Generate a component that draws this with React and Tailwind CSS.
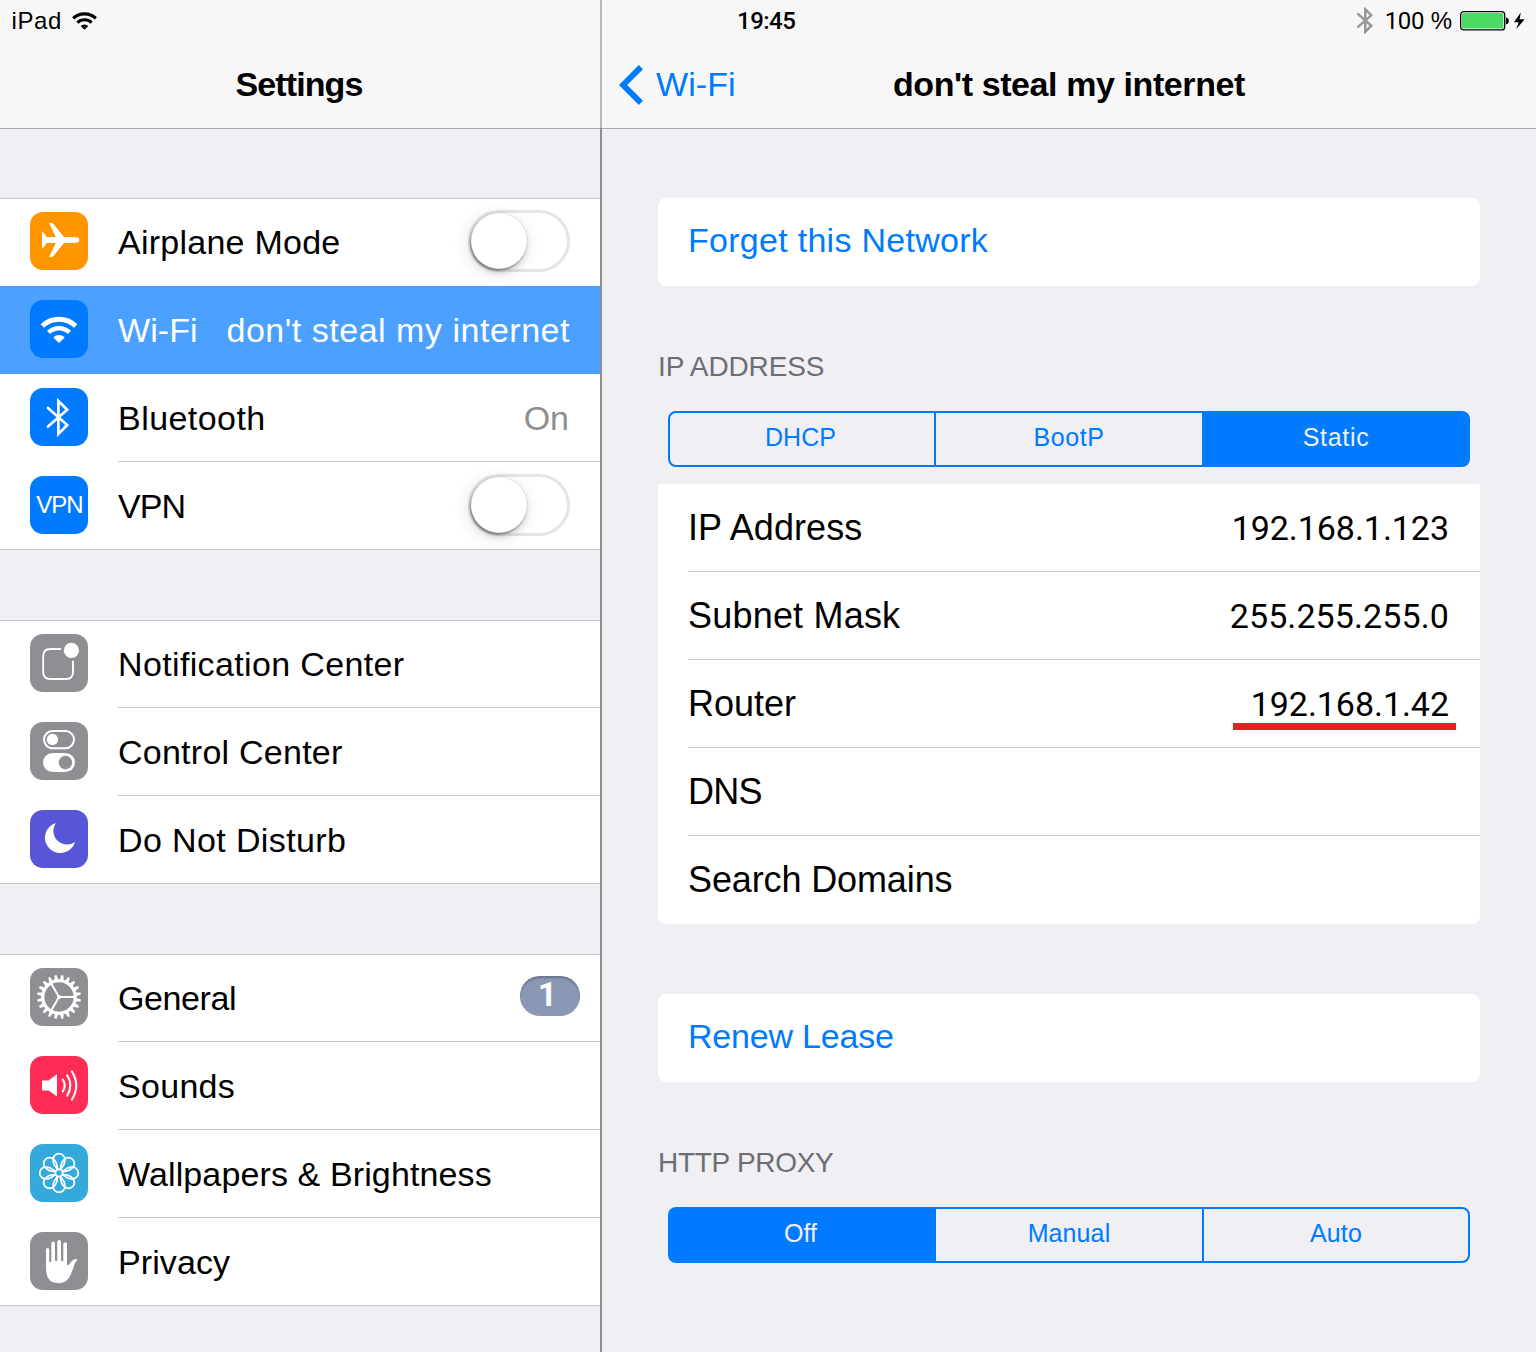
import React from "react";

const WifiGlyph = () => (
  <>
    <path d="M12.3 26A24 24 0 0 1 45.7 26" fill="none" stroke="currentColor" strokeWidth="4.8" />
    <path d="M18.5 32.4A15.1 15.1 0 0 1 39.5 32.4" fill="none" stroke="currentColor" strokeWidth="4.5" />
    <path d="M23.3 37.4A8.2 8.2 0 0 1 34.7 37.4L29 43Z" fill="currentColor" />
  </>
);

const BluetoothGlyph = ({ width = 2.7 }) => (
  <path
    d="M18 20L37.2 37L28.4 46V13L37.2 21.7L18 38.6"
    fill="none"
    stroke="currentColor"
    strokeWidth={width}
    strokeLinecap="round"
  />
);

const Tile = ({ className, children }) => (
  <svg viewBox="0 0 58 58" className={`mb-[2px] size-[58px] shrink-0 rounded-[13px] text-white ${className}`}>
    {children}
  </svg>
);

const AirplaneIcon = () => (
  <Tile className="bg-[#ff9500]">
    <path
      fill="currentColor"
      d="M12 19.6H12.8L16.6 25H25.8L19 11H22.6L34 25.1L46.3 25.3C48.2 25.4 49.4 26.6 49.4 28S48.2 30.6 46.3 30.7L34 30.9L22.6 45H19L25.8 31H16.6L12.8 36.4H12Z"
    />
  </Tile>
);

const NotificationIcon = () => (
  <Tile className="bg-[#8e8e93]">
    <path
      fill="none"
      stroke="currentColor"
      strokeWidth="1.9"
      d="M31.2 15H20.3Q13.2 15 13.2 22V38Q13.2 45 20.3 45H36Q43 45 43 38V26.8"
    />
    <circle cx="41.4" cy="16.4" r="7.6" fill="currentColor" />
  </Tile>
);

const ControlIcon = () => (
  <Tile className="bg-[#8e8e93]">
    <rect x="14" y="9" width="30" height="17.2" rx="8.6" fill="none" stroke="currentColor" strokeWidth="2" />
    <circle cx="22.4" cy="17.5" r="5.7" fill="currentColor" />
    <rect x="13" y="31" width="32" height="19" rx="9.5" fill="currentColor" />
    <circle cx="35.4" cy="40.5" r="6.7" fill="#8e8e93" />
  </Tile>
);

const MoonIcon = () => (
  <Tile className="bg-[#5856d6]">
    <path fill="currentColor" d="M26 13A15.35 15.35 0 1 0 45 32A13.6 13.6 0 0 1 26 13Z" />
  </Tile>
);

const teeth = Array.from({ length: 20 }, (_, i) => i * 18);

const GearIcon = () => (
  <Tile className="bg-[#8e8e93]">
    <circle cx="29" cy="29" r="16.2" fill="none" stroke="currentColor" strokeWidth="3.1" />
    {teeth.map((a) => (
      <path key={a} d="M27 12.2L28 7H30L31 12.2Z" fill="currentColor" transform={`rotate(${a + 9} 29 29)`} />
    ))}
    <path d="M29 29H45M29 29L21.2 15.5M29 29L21.2 42.5" stroke="currentColor" strokeWidth="2" fill="none" />
    <circle cx="29" cy="29" r="2" fill="currentColor" />
  </Tile>
);

const SoundIcon = () => (
  <Tile className="bg-[#ff2d55]">
    <path fill="currentColor" d="M12 24.6H18.6L27 18.2V40.6L18.6 34.4H12Z" />
    <path
      fill="none"
      stroke="currentColor"
      strokeWidth="2.1"
      strokeLinecap="round"
      d="M32.8 23.6Q36.8 29.4 32.8 35.3M37.2 19.4Q43.6 29.4 37.2 39.6M41.9 15.4Q50.6 29.4 41.9 43.6"
    />
  </Tile>
);

const petals = [0, 45, 90, 135, 180, 225, 270, 315];

const FlowerIcon = () => (
  <Tile className="bg-[#34aadc]">
    <g fill="none" stroke="currentColor" strokeWidth="1.7">
      {petals.map((a) => (
        <path
          key={a}
          transform={`rotate(${a} 29 29)`}
          d="M27.6 25.8L24.2 20.8Q23.1 18.6 23.1 15.6A5.9 5.9 0 0 1 34.9 15.6Q34.9 18.6 33.8 20.8L30.4 25.8"
        />
      ))}
      <circle cx="29" cy="29" r="3.6" />
    </g>
  </Tile>
);

const HandIcon = () => (
  <Tile className="bg-[#8e8e93]">
    <path
      fill="currentColor"
      d="M16 17.5A1.6 1.6 0 0 1 19.2 17.5V29.5Q20.2 30.6 21.3 29.5V11.3A1.85 1.85 0 0 1 25 11.3V28.6Q26.1 29.8 27.3 28.6V9.8A1.85 1.85 0 0 1 31 9.8V28.6Q32.2 29.8 33.3 28.6V12A1.85 1.85 0 0 1 37 12V32.6Q38 33.8 39.2 32.5Q42 27.6 45.6 27Q47.2 26.9 47.2 28.2Q45.4 29.8 44.6 32Q42.9 37.5 41.2 41.5Q37.8 51 28.6 51.2Q17.6 51 16.4 41Q16 38 16 34Z"
    />
  </Tile>
);

const VpnIcon = () => (
  <div className="mb-[2px] flex size-[58px] shrink-0 items-center justify-center rounded-[13px] bg-[#007aff] pl-px text-[24px] leading-[58px] tracking-[-1px] text-white">
    VPN
  </div>
);

const Toggle = () => (
  <div className="mb-[2px] h-[62px] w-[102px] rounded-full border-[3px] border-[#e5e5e5]">
    <div className="size-[56px] rounded-full bg-white shadow-[-1px_2px_2px_rgba(0,0,0,0.32),0_0_1px_rgba(0,0,0,0.3),0_4px_6px_rgba(0,0,0,0.12),-2px_3px_18px_rgba(0,0,0,0.12)]" />
  </div>
);

const Section = ({ children }) => (
  <section className="mb-[70px] border-t border-[#c8c7cc] bg-white *:first:-mt-px">{children}</section>
);

const line = "shadow-[inset_0_-1px_0_#c8c7cc]";

const Row = ({ icon, label, tracking, children, divider, last, selected }) => (
  <div
    className={`flex h-[88px] items-center pl-[30px] ${selected ? "bg-[#4ca0ff] text-white" : ""} ${last ? line : ""}`}
  >
    {icon}
    <div className={`ml-[30px] flex h-full flex-1 items-center justify-between pr-[30px] ${divider ? line : ""}`}>
      <span className={tracking}>{label}</span>
      {children}
    </div>
  </div>
);

const Segmented = ({ items, active }) => {
  const widths = ["w-[266px] pr-[3px] border-r-2 rounded-l-[4px]", "w-[268px] border-r-2", "w-[264px] rounded-r-[4px]"];
  return (
    <div className="mx-[10px] flex h-[56px] rounded-[8px] border-2 border-[#007aff] text-[25px] leading-[48px] text-[#007aff]">
      {items.map(([t, tr], i) => (
        <div
          key={t}
          className={`${widths[i]} h-[52px] border-[#007aff] text-center ${tr} ${i === active ? "bg-[#007aff] text-[#efeff4]" : ""}`}
        >
          {t}
        </div>
      ))}
    </div>
  );
};

const Field = ({ label, tracking, children, last }) => (
  <div className={`ml-[30px] flex h-[88px] items-center justify-between pr-[31px] ${last ? "" : line}`}>
    <span className={`text-[36px] ${tracking}`}>{label}</span>
    {children}
  </div>
);

const LinkCard = ({ children, className }) => (
  <div className={`h-[88px] rounded-[8px] bg-white pl-[30px] leading-[84px] text-[#007aff] ${className}`}>{children}</div>
);

const number = "font-['Roboto','Liberation_Sans',sans-serif] font-normal";

export default function App() {
  return (
    <div className="flex h-[1352px] w-[1536px] overflow-hidden bg-[#efeff4] font-['Liberation_Sans',Arial,sans-serif] text-[34px] leading-[40px] whitespace-nowrap text-black">
      <aside className="w-[600px] shrink-0">
        <header className="mb-[69px] h-[129px] border-b border-[#a7a7aa] bg-[#f7f7f7]">
          <div className="flex h-[41px] items-center pl-[11.5px] text-[24px]">
            <span className="w-[60px] tracking-[0.6px]">iPad</span>
            <svg viewBox="10.7 16.6 36.6 26.6" className="h-[18px] w-[25px]">
              <WifiGlyph />
            </svg>
          </div>
          <h1 className="mt-[23px] pr-[2px] text-center font-bold tracking-[-0.89px]">Settings</h1>
        </header>

        <Section>
          <Row icon={<AirplaneIcon />} label="Airplane Mode" tracking="tracking-[0.25px]">
            <Toggle />
          </Row>
          <Row icon={<Tile className="bg-[#007aff]"><WifiGlyph /></Tile>} label="Wi-Fi" tracking="tracking-[0.07px]" selected>
            <span className="tracking-[0.52px]">don't steal my internet</span>
          </Row>
          <Row
            icon={<Tile className="bg-[#007aff]"><BluetoothGlyph /></Tile>}
            label="Bluetooth"
            tracking="tracking-[0.45px]"
            divider
          >
            <span className="mr-px text-[#8e8e93]">On</span>
          </Row>
          <Row icon={<VpnIcon />} label="VPN" tracking="tracking-[-0.9px]" last>
            <Toggle />
          </Row>
        </Section>

        <Section>
          <Row icon={<NotificationIcon />} label="Notification Center" tracking="tracking-[0.36px]" divider />
          <Row icon={<ControlIcon />} label="Control Center" tracking="tracking-[0.25px]" divider />
          <Row icon={<MoonIcon />} label="Do Not Disturb" tracking="tracking-[0.38px]" last />
        </Section>

        <Section>
          <Row icon={<GearIcon />} label="General" tracking="tracking-[-0.4px]" divider>
            <span className="-mr-[10px] mb-[4px] h-[40px] w-[60px] rounded-full bg-[#8b98b3] pr-[5px] text-center font-['Roboto','Liberation_Sans',sans-serif] text-[33px] leading-[37px] font-bold text-white shadow-[inset_0_2px_2px_rgba(60,70,100,0.45)]">
              1
            </span>
          </Row>
          <Row icon={<SoundIcon />} label="Sounds" tracking="tracking-[0.3px]" divider />
          <Row icon={<FlowerIcon />} label="Wallpapers & Brightness" tracking="tracking-[0.12px]" divider />
          <Row icon={<HandIcon />} label="Privacy" tracking="tracking-[0.09px]" last />
        </Section>
      </aside>

      <div className="w-[2px] shrink-0">
        <div className="h-[128px] bg-[#b8b8bb]" />
        <div className="h-[1224px] bg-[#8e8e93]" />
      </div>

      <main className="w-[934px]">
        <header className="h-[129px] border-b border-[#a7a7aa] bg-[#f7f7f7]">
          <div className="flex h-[41px] items-center text-[24px]">
            <span className="ml-[135px] flex-1 font-['Roboto','Liberation_Sans',sans-serif] font-medium tracking-[-0.5px]">
              19:45
            </span>
            <svg viewBox="16.5 9.7 23 39.4" className="mr-[11px] h-[27px] w-[16px] text-[#98989a]">
              <BluetoothGlyph width={3.6} />
            </svg>
            <span className="w-[68px] text-right">
              <span className={`${number} tracking-[-0.4px]`}>100</span> %
            </span>
            <svg viewBox="0 0 66 20" className="mr-[10px] ml-[8px] h-[20px] w-[66px]">
              <rect x="0.7" y="0.7" width="44" height="18.2" rx="3" fill="#fff" stroke="#000" strokeWidth="1.3" />
              <rect x="2" y="2" width="41.4" height="15.6" rx="1.6" fill="#4cd964" />
              <path d="M46 6.4C49.8 6.8 49.8 12.8 46 13.2Z" fill="#000" />
              <path d="M60.8 1.6L54 11.2H58.6L56.4 18L64.6 8.2H59.6Z" fill="#000" />
            </svg>
          </div>
          <div className="mt-[23px] flex h-[40px] items-center">
            <svg viewBox="0 0 24 40" className="mt-px ml-[16.5px] h-[40px] w-[24px] text-[#007aff]">
              <path d="M19.8 0L24 4.2L8.2 20L24 35.8L19.8 40L0 20Z" fill="currentColor" />
            </svg>
            <span className="ml-[13.5px] w-[237px] tracking-[0.07px] text-[#007aff]">Wi-Fi</span>
            <h2 className="font-bold tracking-[-0.41px]">don't steal my internet</h2>
          </div>
        </header>

        <div className="mx-[56px] w-[822px] pt-[69px]">
          <LinkCard className="tracking-[0.28px]">Forget this Network</LinkCard>

          <div className="mt-[61px] mb-[24px] text-[28px] tracking-[-0.12px] text-[#6d6d72]">IP ADDRESS</div>
          <Segmented
            active={2}
            items={[
              ["DHCP", "tracking-[0.1px]"],
              ["BootP", "tracking-[0.6px]"],
              ["Static", "tracking-[0.7px]"],
            ]}
          />
          <div className="mt-[17px] rounded-b-[8px] bg-white">
            <Field label="IP Address" tracking="tracking-[0.1px]">
              <span className={`${number} tracking-[-0.05px]`}>192.168.1.123</span>
            </Field>
            <Field label="Subnet Mask" tracking="tracking-[0.2px]">
              <span className={`${number} tracking-[0.1px]`}>255.255.255.0</span>
            </Field>
            <Field label="Router" tracking="tracking-normal">
              <span className="relative">
                <span className={`${number} tracking-[-0.05px]`}>192.168.1.42</span>
                <span className="absolute top-[39px] -right-[7px] h-[7px] w-[223px] bg-[#ed1c24]" />
              </span>
            </Field>
            <Field label="DNS" tracking="tracking-[-0.7px]" />
            <Field label="Search Domains" tracking="tracking-[-0.12px]" last />
          </div>

          <LinkCard className="mt-[70px] tracking-[-0.2px]">Renew Lease</LinkCard>

          <div className="mt-[61px] mb-[24px] text-[28px] tracking-[-0.3px] text-[#6d6d72]">HTTP PROXY</div>
          <Segmented
            active={0}
            items={[
              ["Off", "tracking-normal"],
              ["Manual", "tracking-[0.1px]"],
              ["Auto", "tracking-[0.2px]"],
            ]}
          />
        </div>
      </main>
    </div>
  );
}
